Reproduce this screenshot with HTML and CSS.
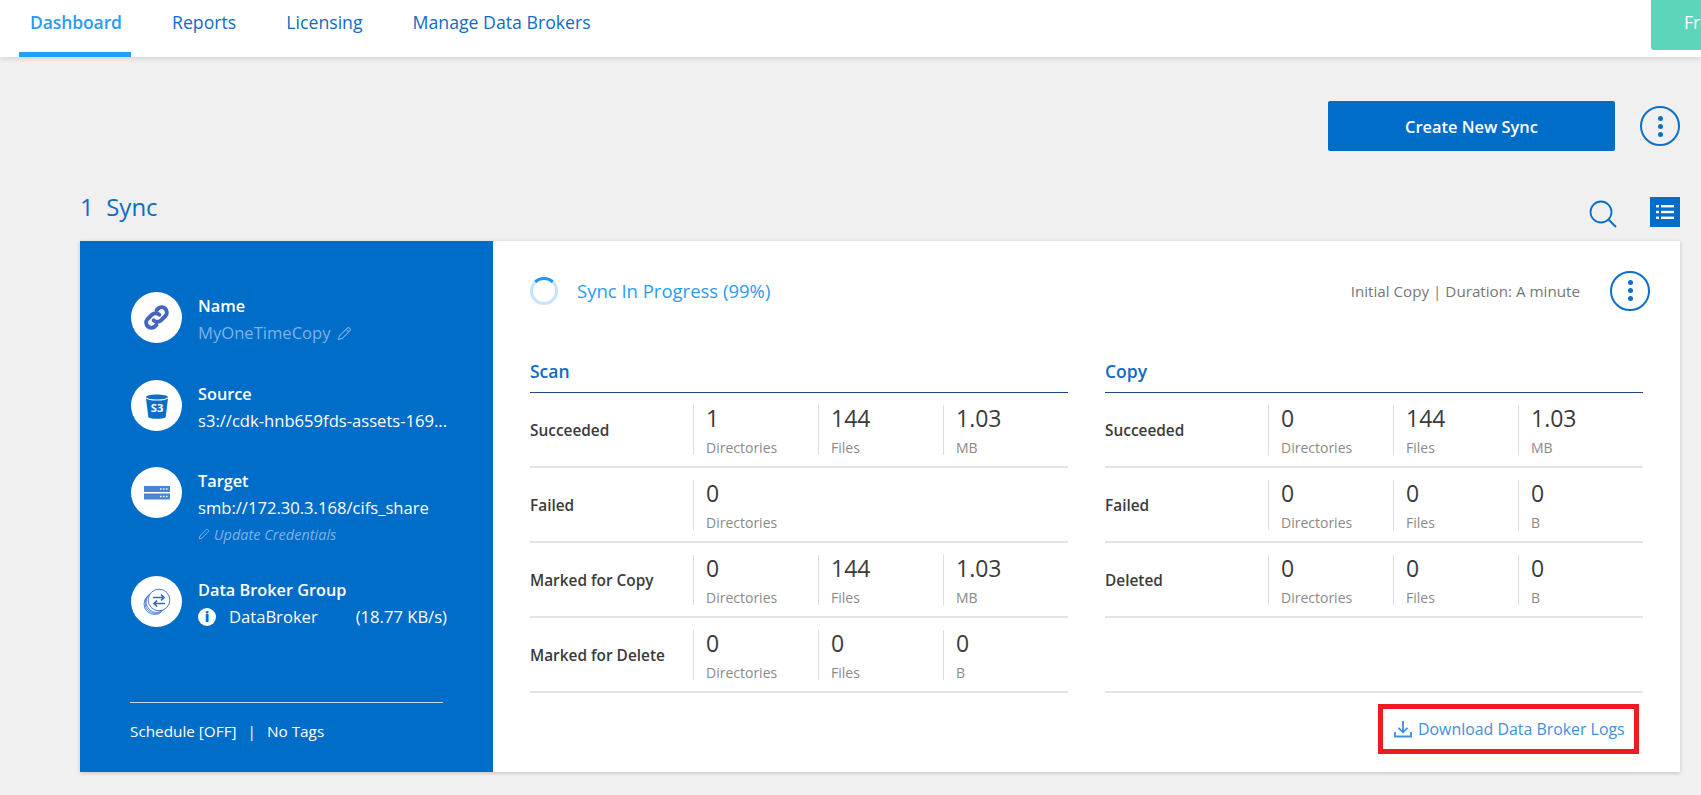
FILE: index.html
```html
<!DOCTYPE html>
<html lang="en">
<head>
  <meta charset="UTF-8">
  <meta name="viewport" content="width=device-width, initial-scale=1.0">
  <title>Sync Dashboard</title>
  <link rel="stylesheet" href="styles.css">
</head>
<body>
  <header class="topnav">
    <nav class="tabs">
      <a class="tab active">Dashboard</a>
      <a class="tab">Reports</a>
      <a class="tab">Licensing</a>
      <a class="tab">Manage Data Brokers</a>
    </nav>
    <div class="free-btn">Fre</div>
  </header>

  <main class="content">
    <div class="actions">
      <button class="create-btn">Create New Sync</button>
      <button class="more-btn"><i></i><i></i><i></i></button>
    </div>

    <div class="list-head">
      <h1 class="sync-count">1&nbsp; Sync</h1>
      <div class="list-tools">
        <svg class="search-icon" viewBox="0 0 28 28" width="28" height="28"><circle cx="12" cy="12" r="10.5" fill="none" stroke="#0b6fca" stroke-width="1.8"/><path d="M19.5 19.5 27 27" stroke="#0b6fca" stroke-width="2" fill="none"/></svg>
        <div class="list-icon">
          <svg viewBox="0 0 30 30" width="30" height="30"><g fill="#fff"><rect x="6" y="8" width="3" height="2.4"/><rect x="11" y="8" width="13" height="2.4"/><rect x="6" y="13.8" width="3" height="2.4"/><rect x="11" y="13.8" width="13" height="2.4"/><rect x="6" y="19.6" width="3" height="2.4"/><rect x="11" y="19.6" width="13" height="2.4"/></g></svg>
        </div>
      </div>
    </div>

    <section class="card">
      <aside class="side">
        <div class="info-list">
          <div class="info info-name">
            <div class="info-icon">
              <svg viewBox="0 0 28 28" width="31" height="31"><g fill="none" stroke="#4466c0" stroke-width="3.6" stroke-linecap="round"><path d="M11.5 16.5a4.6 4.6 0 0 0 6.6 0l4.2-4.2a4.7 4.7 0 0 0-6.6-6.6l-1.6 1.6"/><path d="M16.5 11.5a4.6 4.6 0 0 0-6.6 0l-4.2 4.2a4.7 4.7 0 0 0 6.6 6.6l1.6-1.6"/></g></svg>
            </div>
            <div class="info-text">
              <div class="info-title">Name</div>
              <div class="info-value muted">MyOneTimeCopy
                <svg class="pencil" viewBox="0 0 16 16" width="15" height="15"><path d="M1.5 14.5 2.6 10.6 11 2.2a1.5 1.5 0 0 1 2.1 0l.7.7a1.5 1.5 0 0 1 0 2.1L5.4 13.4ZM9.8 3.4l2.8 2.8" fill="none" stroke="#7fb2e5" stroke-width="1.1"/></svg>
              </div>
            </div>
          </div>
          <div class="info">
            <div class="info-icon">
              <svg viewBox="0 0 28 30" width="26" height="28"><path d="M2 5.500c0-4 24-4 24 0l-2.600 21c-.3 3-18.500 3-18.800 0Z" fill="#0b6fca"/><path d="M2 6c3 3.400 21 3.400 24 0" fill="none" stroke="#fff" stroke-width="1.2"/><text x="14" y="22" class="s3-label">S3</text></svg>
            </div>
            <div class="info-text">
              <div class="info-title">Source</div>
              <div class="info-value">s3://cdk-hnb659fds-assets-169...</div>
            </div>
          </div>
          <div class="info info-target">
            <div class="info-icon">
              <svg viewBox="0 0 26 14" width="26" height="14"><rect width="26" height="6" fill="#4a85cf"/><rect y="7.500" width="26" height="6" fill="#4a85cf"/><g fill="#fff"><rect x="16" y="2.300" width="1.500" height="1.400"/><rect x="19" y="2.300" width="1.500" height="1.400"/><rect x="22" y="2.300" width="1.500" height="1.400"/><rect x="16" y="9.800" width="1.500" height="1.400"/><rect x="19" y="9.800" width="1.500" height="1.400"/><rect x="22" y="9.800" width="1.500" height="1.400"/></g></svg>
            </div>
            <div class="info-text">
              <div class="info-title">Target</div>
              <div class="info-value">smb://172.30.3.168/cifs_share</div>
              <div class="info-sub">
                <svg viewBox="0 0 16 16" width="12" height="12"><path d="M1.5 14.500 2.600 10.600 11 2.200a1.500 1.500 0 0 1 2.100 0l.7.7a1.500 1.500 0 0 1 0 2.100L5.400 13.400Z" fill="none" stroke="#7fb2e5" stroke-width="1.300"/></svg>
                Update Credentials
              </div>
            </div>
          </div>
          <div class="info">
            <div class="info-icon">
              <svg viewBox="0 0 28 28" width="28" height="28"><g fill="none" stroke="#4a78c8" stroke-width=".9"><circle cx="11.500" cy="16" r="10.500"/><circle cx="12.500" cy="15" r="10.500"/><circle cx="13.500" cy="14" r="10.500"/></g><circle cx="16" cy="12" r="10.800" fill="#fff" stroke="#4a78c8" stroke-width="1"/><g fill="none" stroke="#3568bc" stroke-width="1.700"><path d="M10 9.500h11M18 6.500l3 3-3 3"/><path d="M22 15.500H11M14 12.500l-3 3 3 3"/></g></svg>
            </div>
            <div class="info-text">
              <div class="info-title">Data Broker Group</div>
              <div class="info-value broker">
                <span class="info-dot">i</span>
                <span class="broker-name">DataBroker</span>
                <span>(18.77 KB/s)</span>
              </div>
            </div>
          </div>
        </div>
        <div class="side-foot">
          <span>Schedule [OFF]</span><span class="sep">|</span><span>No Tags</span>
        </div>
      </aside>

      <div class="detail">
        <div class="status">
          <div class="spinner"></div>
          <div class="status-text">Sync In Progress (99%)</div>
          <div class="status-meta">Initial Copy | Duration: A minute</div>
          <button class="more-btn"><i></i><i></i><i></i></button>
        </div>

        <div class="tables">
          <div class="stat-table">
            <h2>Scan</h2>
            <div class="row">
              <div class="row-label">Succeeded</div>
              <div class="cell"><b>1</b><span>Directories</span></div>
              <div class="cell"><b>144</b><span>Files</span></div>
              <div class="cell"><b>1.03</b><span>MB</span></div>
            </div>
            <div class="row">
              <div class="row-label">Failed</div>
              <div class="cell"><b>0</b><span>Directories</span></div>
            </div>
            <div class="row">
              <div class="row-label">Marked for Copy</div>
              <div class="cell"><b>0</b><span>Directories</span></div>
              <div class="cell"><b>144</b><span>Files</span></div>
              <div class="cell"><b>1.03</b><span>MB</span></div>
            </div>
            <div class="row">
              <div class="row-label">Marked for Delete</div>
              <div class="cell"><b>0</b><span>Directories</span></div>
              <div class="cell"><b>0</b><span>Files</span></div>
              <div class="cell"><b>0</b><span>B</span></div>
            </div>
          </div>

          <div class="stat-table">
            <h2>Copy</h2>
            <div class="row">
              <div class="row-label">Succeeded</div>
              <div class="cell"><b>0</b><span>Directories</span></div>
              <div class="cell"><b>144</b><span>Files</span></div>
              <div class="cell"><b>1.03</b><span>MB</span></div>
            </div>
            <div class="row">
              <div class="row-label">Failed</div>
              <div class="cell"><b>0</b><span>Directories</span></div>
              <div class="cell"><b>0</b><span>Files</span></div>
              <div class="cell"><b>0</b><span>B</span></div>
            </div>
            <div class="row">
              <div class="row-label">Deleted</div>
              <div class="cell"><b>0</b><span>Directories</span></div>
              <div class="cell"><b>0</b><span>Files</span></div>
              <div class="cell"><b>0</b><span>B</span></div>
            </div>
            <div class="row row-empty"></div>
          </div>
        </div>

        <div class="detail-foot">
          <a class="logs-link">
            <svg viewBox="0 0 18 18" width="18" height="18"><path d="M9 1v11M4.500 7.800 9 12.300l4.500-4.500M1 12v4.500h16V12" fill="none" stroke="#3f8fdc" stroke-width="1.800"/></svg>
            Download Data Broker Logs
          </a>
        </div>
      </div>
    </section>
  </main>
</body>
</html>
```

FILE: styles.css
```css
body {
  margin: 0;
  height: 795px;
  overflow: hidden;
  font-family: "Open Sans", "Noto Sans", Arial, sans-serif;
  font-size: 15px;
  background-color: #f0f0f0;
  color: #3b3b3b;
}

/* top bar */
.topnav {
  display: flex;
  justify-content: space-between;
  height: 57px;
  background-color: #ffffff;
  box-shadow: 0 1px 6px rgba(0, 0, 0, 0.15);
  overflow: hidden;
}

.tabs {
  display: flex;
  gap: 50px;
  padding-left: 30px;
}

.tab {
  line-height: 44px;
  font-size: 17.7px;
  color: #0f6bc4;
}

.tab.active {
  box-sizing: border-box;
  width: 112px;
  height: 57px;
  padding-left: 11px;
  margin-left: -11px;
  margin-right: -9px;
  border-bottom: 5px solid #1ea1ff;
  font-size: 17.5px;
  font-weight: 600;
  letter-spacing: -0.1px;
  color: #2a9bf5;
}

.free-btn {
  width: 50px;
  height: 50px;
  padding-left: 33px;
  box-sizing: border-box;
  line-height: 45px;
  font-size: 17.5px;
  color: #fff;
  background-color: #5cd6bb;
  border-radius: 0 0 0 3px;
}

/* page */
.content {
  padding: 44px 21px 0 80px;
}

.actions {
  display: flex;
  justify-content: flex-end;
  align-items: center;
  gap: 25px;
}

.create-btn {
  width: 287px;
  height: 50px;
  border: none;
  border-radius: 2px;
  background-color: #006dc9;
  color: #fff;
  font-family: inherit;
  font-size: 16.4px;
  font-weight: 600;
}

.more-btn {
  display: flex;
  flex-direction: column;
  align-items: center;
  justify-content: center;
  gap: 3px;
  width: 40px;
  height: 40px;
  padding: 0;
  border: 2px solid #0b6fca;
  border-radius: 50%;
  background: transparent;
  flex-shrink: 0;
}

.more-btn i {
  width: 5px;
  height: 5px;
  border-radius: 50%;
  background-color: #0b6fca;
}

.list-head {
  display: flex;
  justify-content: space-between;
  align-items: center;
  height: 30px;
  margin-top: 46px;
}

.sync-count {
  margin: -11px 0 0;
  font-size: 24px;
  font-weight: 400;
  color: #0f6bc4;
}

.list-tools {
  display: flex;
  align-items: center;
  gap: 33px;
}

.search-icon {
  display: block;
  margin-top: 3px;
}

.list-icon {
  width: 30px;
  height: 30px;
  background-color: #006dc9;
}

.list-icon svg {
  display: block;
}

/* card */
.card {
  display: flex;
  height: 531px;
  margin-top: 14px;
  background-color: #ffffff;
  box-shadow: 0 1px 4px rgba(0, 0, 0, 0.2);
}

.side {
  display: flex;
  flex-direction: column;
  justify-content: space-between;
  box-sizing: border-box;
  width: 413px;
  padding: 51px 50px 0;
  background-color: #006dc9;
  color: #fff;
}

.info-list {
  display: flex;
  flex-direction: column;
  gap: 36px;
}

.info {
  display: flex;
  gap: 16px;
  height: 51px;
  white-space: nowrap;
}

.info-name {
  height: 52px;
}

.info-target {
  height: 73px;
}

.info-icon {
  display: flex;
  align-items: center;
  justify-content: center;
  width: 51px;
  height: 51px;
  margin-left: 1px;
  border-radius: 50%;
  background-color: #ffffff;
  flex-shrink: 0;
}

.s3-label {
  font-size: 12px;
  font-weight: 700;
  fill: #fff;
  text-anchor: middle;
}

.info-text {
  padding-top: 1px;
  line-height: 26px;
}

.info-title {
  font-size: 16.3px;
  font-weight: 600;
}

.info-value {
  margin-top: 1px;
  font-size: 16.6px;
}

.muted {
  color: #7fb2e5;
}

.pencil {
  vertical-align: -2px;
  margin-left: 2px;
}

.info-sub {
  margin-top: 1px;
  font-size: 14.5px;
  font-style: italic;
  color: #7fb2e5;
}

.broker {
  display: flex;
  align-items: center;
}

.info-dot {
  width: 18px;
  height: 18px;
  margin-right: 13px;
  border-radius: 50%;
  background-color: #fff;
  color: #006dc9;
  font-size: 14px;
  font-weight: 800;
  line-height: 18px;
  text-align: center;
}

.broker-name {
  margin-right: 38px;
}

.side-foot {
  height: 69px;
  line-height: 57px;
  border-top: 1px solid #c5d9ee;
  font-size: 15.3px;
}

.sep {
  margin: 0 11px;
}

/* right side */
.detail {
  flex: 1;
  padding: 0 37px;
}

.status {
  display: flex;
  align-items: center;
  height: 92px;
  padding-top: 7px;
  box-sizing: border-box;
}

.spinner {
  box-sizing: border-box;
  width: 28px;
  height: 28px;
  border: 3px solid #c5e3fb;
  border-top-color: #1e96f5;
  border-radius: 50%;
}

.status-text {
  margin-left: 19px;
  font-size: 18.5px;
  color: #2a9bf5;
}

.status-meta {
  margin-left: auto;
  margin-right: 30px;
  font-size: 15.2px;
  color: #777;
}

.status .more-btn {
  margin-right: -7px;
}

.tables {
  display: flex;
  justify-content: space-between;
  margin-top: 24px;
}

.stat-table {
  width: 538px;
}

.stat-table h2 {
  height: 35px;
  margin: 0;
  line-height: 28px;
  font-size: 17.5px;
  font-weight: 600;
  color: #0f6bc4;
  border-bottom: 1px solid #1d4a7a;
}

.row {
  display: flex;
  align-items: center;
  box-sizing: border-box;
  height: 75px;
  border-bottom: 2px solid #e4e4e4;
}

.row-label {
  width: 163px;
  margin-top: 2px;
  font-size: 15.4px;
  font-weight: 600;
}

.cell {
  display: flex;
  flex-direction: column;
  justify-content: space-between;
  box-sizing: border-box;
  width: 125px;
  height: 50px;
  padding-left: 12px;
  border-left: 1px solid #dcdcdc;
}

.cell b {
  line-height: 26px;
  font-size: 23px;
  font-weight: 400;
}

.cell span {
  line-height: 15px;
  font-size: 14px;
  color: #8a8a8a;
}

.detail-foot {
  display: flex;
  justify-content: flex-end;
  margin-top: 11px;
  margin-right: 4px;
}

.logs-link {
  display: flex;
  align-items: center;
  gap: 6px;
  box-sizing: border-box;
  width: 261px;
  height: 50px;
  padding-left: 11px;
  border: 5px solid #ed1c24;
  font-size: 15.9px;
  color: #3f8fdc;
}
```
